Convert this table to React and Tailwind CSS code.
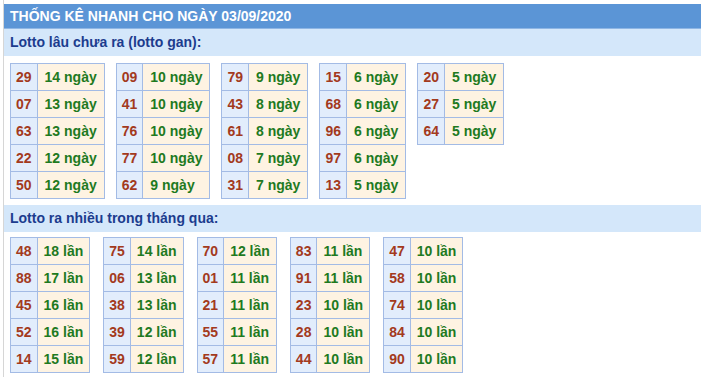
const GAN = [
  [["29", "14"], ["07", "13"], ["63", "13"], ["22", "12"], ["50", "12"]],
  [["09", "10"], ["41", "10"], ["76", "10"], ["77", "10"], ["62", "9"]],
  [["79", "9"], ["43", "8"], ["61", "8"], ["08", "7"], ["31", "7"]],
  [["15", "6"], ["68", "6"], ["96", "6"], ["97", "6"], ["13", "5"]],
  [["20", "5"], ["27", "5"], ["64", "5"]],
];

const NHIEU = [
  [["48", "18"], ["88", "17"], ["45", "16"], ["52", "16"], ["14", "15"]],
  [["75", "14"], ["06", "13"], ["38", "13"], ["39", "12"], ["59", "12"]],
  [["70", "12"], ["01", "11"], ["21", "11"], ["55", "11"], ["57", "11"]],
  [["83", "11"], ["91", "11"], ["23", "10"], ["28", "10"], ["44", "10"]],
  [["47", "10"], ["58", "10"], ["74", "10"], ["84", "10"], ["90", "10"]],
];

function StatTable({ rows, unit, pad }) {
  return (
    <table className="border-collapse border border-[#a3bbe5] self-start">
      <tbody>
        {rows.map(([num, count]) => (
          <tr key={num}>
            <td className="border border-[#a3bbe5] bg-[#e2edfc] px-[5px] py-[4px] text-center leading-[18px] text-[#a33a1d]">
              {num}
            </td>
            <td className={`border border-[#a3bbe5] bg-[#fef3e2] ${pad} py-[4px] leading-[18px] text-[#1f7a1f] whitespace-nowrap`}>
              {count} {unit}
            </td>
          </tr>
        ))}
      </tbody>
    </table>
  );
}

function SubHeader({ children }) {
  return (
    <div className="h-[27px] bg-[#d4e7fa] pl-[6px] flex items-center text-[14px] font-bold text-[#1c3c8e]">
      {children}
    </div>
  );
}

export default function App() {
  return (
    <div
      className="min-h-[377px] bg-white pt-[4px] ml-[3px] border-l border-[#d6d6d6] text-[14px] font-bold"
      style={{ fontFamily: '"Liberation Sans", Arial, sans-serif' }}
    >
      {/* Title bar */}
      <div className="h-[25px] bg-[#5b95d6] pl-[6px] flex items-center text-white text-[14px] font-bold border-b border-[#8fb6e4]">
        THỐNG KÊ NHANH CHO NGÀY 03/09/2020
      </div>

      <SubHeader>Lotto lâu chưa ra (lotto gan):</SubHeader>
      <div className="flex items-start gap-[11px] pl-[6px] pt-[7px] pb-[6px]">
        {GAN.map((rows, i) => (
          <StatTable key={i} rows={rows} unit="ngày" pad="px-[7px]" />
        ))}
      </div>

      <SubHeader>Lotto ra nhiều trong tháng qua:</SubHeader>
      <div className="flex items-start gap-[13px] pl-[6px] pt-[5px]">
        {NHIEU.map((rows, i) => (
          <StatTable key={i} rows={rows} unit="lần" pad="px-[6px]" />
        ))}
      </div>
    </div>
  );
}
